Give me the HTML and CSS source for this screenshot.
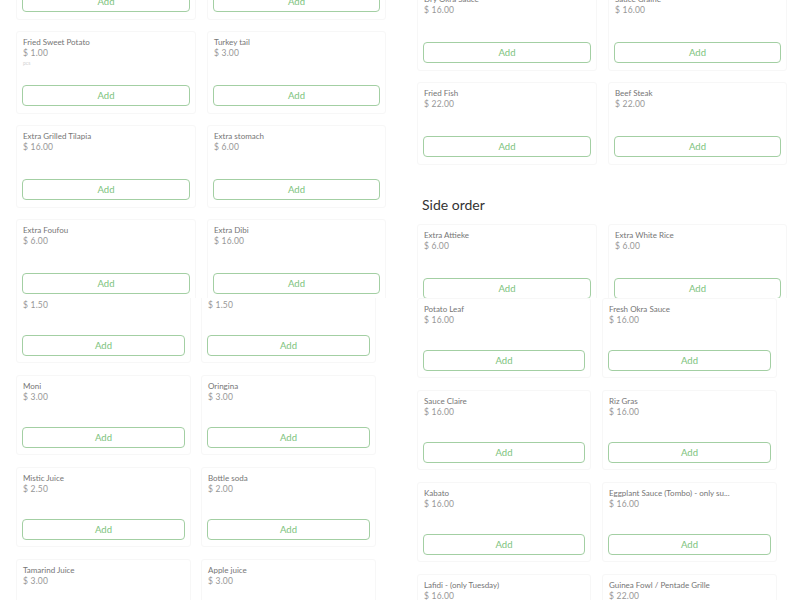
FILE: index.html
```html
<!DOCTYPE html>
<html lang="en">
<head>
    <meta charset="UTF-8">
    <meta name="viewport" content="width=device-width, initial-scale=1.0">
    <title>Menu</title>
    <link rel="stylesheet" href="styles.css">
</head>
<body>
    <div class="page">
        <!-- Left column -->
        <div class="column">
            <div class="pane pane-left-top">
                <div class="menu menu-lg menu-left-top">
                    <div class="card">
                        <div class="card-name">Fried Plantain</div>
                        <div class="card-price">$ 3.00</div>
                        <button class="add-btn">Add</button>
                    </div>
                    <div class="card">
                        <div class="card-name">Fried Yam</div>
                        <div class="card-price">$ 3.00</div>
                        <button class="add-btn">Add</button>
                    </div>
                    <div class="card">
                        <div class="card-name">Fried Sweet Potato</div>
                        <div class="card-price">$ 1.00</div>
                        <div class="card-note">pcs</div>
                        <button class="add-btn">Add</button>
                    </div>
                    <div class="card">
                        <div class="card-name">Turkey tail</div>
                        <div class="card-price">$ 3.00</div>
                        <button class="add-btn">Add</button>
                    </div>
                    <div class="card">
                        <div class="card-name">Extra Grilled Tilapia</div>
                        <div class="card-price">$ 16.00</div>
                        <button class="add-btn">Add</button>
                    </div>
                    <div class="card">
                        <div class="card-name">Extra stomach</div>
                        <div class="card-price">$ 6.00</div>
                        <button class="add-btn">Add</button>
                    </div>
                    <div class="card">
                        <div class="card-name">Extra Foufou</div>
                        <div class="card-price">$ 6.00</div>
                        <button class="add-btn">Add</button>
                    </div>
                    <div class="card">
                        <div class="card-name">Extra Dibi</div>
                        <div class="card-price">$ 16.00</div>
                        <button class="add-btn">Add</button>
                    </div>
                </div>
            </div>
            <div class="pane pane-left-bottom">
                <div class="menu menu-sm menu-left-bottom">
                    <div class="card">
                        <div class="card-name">Water</div>
                        <div class="card-price">$ 1.50</div>
                        <button class="add-btn">Add</button>
                    </div>
                    <div class="card">
                        <div class="card-name">Canned soda</div>
                        <div class="card-price">$ 1.50</div>
                        <button class="add-btn">Add</button>
                    </div>
                    <div class="card">
                        <div class="card-name">Moni</div>
                        <div class="card-price">$ 3.00</div>
                        <button class="add-btn">Add</button>
                    </div>
                    <div class="card">
                        <div class="card-name">Oringina</div>
                        <div class="card-price">$ 3.00</div>
                        <button class="add-btn">Add</button>
                    </div>
                    <div class="card">
                        <div class="card-name">Mistic Juice</div>
                        <div class="card-price">$ 2.50</div>
                        <button class="add-btn">Add</button>
                    </div>
                    <div class="card">
                        <div class="card-name">Bottle soda</div>
                        <div class="card-price">$ 2.00</div>
                        <button class="add-btn">Add</button>
                    </div>
                    <div class="card">
                        <div class="card-name">Tamarind Juice</div>
                        <div class="card-price">$ 3.00</div>
                        <button class="add-btn">Add</button>
                    </div>
                    <div class="card">
                        <div class="card-name">Apple juice</div>
                        <div class="card-price">$ 3.00</div>
                        <button class="add-btn">Add</button>
                    </div>
                </div>
            </div>
        </div>

        <!-- Right column -->
        <div class="column">
            <div class="pane pane-right-top">
                <div class="menu menu-lg menu-right-top">
                    <div class="card">
                        <div class="card-name">Dry Okra Sauce</div>
                        <div class="card-price">$ 16.00</div>
                        <button class="add-btn">Add</button>
                    </div>
                    <div class="card">
                        <div class="card-name">Sauce Graine</div>
                        <div class="card-price">$ 16.00</div>
                        <button class="add-btn">Add</button>
                    </div>
                    <div class="card">
                        <div class="card-name">Fried Fish</div>
                        <div class="card-price">$ 22.00</div>
                        <button class="add-btn">Add</button>
                    </div>
                    <div class="card">
                        <div class="card-name">Beef Steak</div>
                        <div class="card-price">$ 22.00</div>
                        <button class="add-btn">Add</button>
                    </div>
                </div>
                <h2 class="section-title">Side order</h2>
                <div class="menu menu-lg menu-side">
                    <div class="card">
                        <div class="card-name">Extra Attieke</div>
                        <div class="card-price">$ 6.00</div>
                        <button class="add-btn">Add</button>
                    </div>
                    <div class="card">
                        <div class="card-name">Extra White Rice</div>
                        <div class="card-price">$ 6.00</div>
                        <button class="add-btn">Add</button>
                    </div>
                </div>
            </div>
            <div class="pane pane-right-bottom">
                <div class="menu menu-sm menu-right-bottom">
                    <div class="card">
                        <div class="card-name">Potato Leaf</div>
                        <div class="card-price">$ 16.00</div>
                        <button class="add-btn">Add</button>
                    </div>
                    <div class="card">
                        <div class="card-name">Fresh Okra Sauce</div>
                        <div class="card-price">$ 16.00</div>
                        <button class="add-btn">Add</button>
                    </div>
                    <div class="card">
                        <div class="card-name">Sauce Claire</div>
                        <div class="card-price">$ 16.00</div>
                        <button class="add-btn">Add</button>
                    </div>
                    <div class="card">
                        <div class="card-name">Riz Gras</div>
                        <div class="card-price">$ 16.00</div>
                        <button class="add-btn">Add</button>
                    </div>
                    <div class="card">
                        <div class="card-name">Kabato</div>
                        <div class="card-price">$ 16.00</div>
                        <button class="add-btn">Add</button>
                    </div>
                    <div class="card">
                        <div class="card-name">Eggplant Sauce (Tombo) - only su...</div>
                        <div class="card-price">$ 16.00</div>
                        <button class="add-btn">Add</button>
                    </div>
                    <div class="card">
                        <div class="card-name">Lafidi - (only Tuesday)</div>
                        <div class="card-price">$ 16.00</div>
                        <button class="add-btn">Add</button>
                    </div>
                    <div class="card">
                        <div class="card-name">Guinea Fowl / Pentade Grille</div>
                        <div class="card-price">$ 22.00</div>
                        <button class="add-btn">Add</button>
                    </div>
                </div>
            </div>
        </div>
    </div>
</body>
</html>
```

FILE: styles.css
```css
/* Core Styling */
*, *:before, *:after {
    margin: 0;
    padding: 0;
    box-sizing: border-box;
}

body {
    font-family: Lato, "Open Sans", sans-serif;
    background-color: #fff;
    color: #555;
    width: 800px;
    height: 600px;
    overflow: hidden;
}

.page {
    display: grid;
    grid-template-columns: 400px 400px;
    height: 600px;
}

.column {
    display: flex;
    flex-direction: column;
}

.pane {
    overflow: hidden;
}

.pane-left-top {
    height: 298px;
    padding-left: 16px;
}

.pane-left-bottom {
    height: 302px;
    padding-left: 16px;
}

.pane-right-top {
    height: 298px;
    padding-left: 17px;
}

.pane-right-bottom {
    height: 302px;
    padding-left: 17px;
}

/* Menu grids */
.menu {
    display: grid;
}

.menu-lg {
    grid-template-columns: 180px 179px;
    column-gap: 11px;
    row-gap: 11px;
}

.menu-lg .card {
    height: 83px;
    padding: 5px 5px 7px;
}

.menu-sm {
    grid-template-columns: 175px 175px;
    column-gap: 10px;
    row-gap: 12px;
}

.menu-sm .card {
    height: 80px;
    padding: 5px 5px 6px;
}

.menu-left-top {
    margin-top: -63px;
}

.menu-right-top {
    margin-top: -12px;
}

.menu-left-bottom {
    margin-top: -15px;
}

.menu-right-bottom {
    grid-template-columns: 174px 175px;
    column-gap: 11px;
}

.section-title {
    font-size: 14px;
    font-weight: 400;
    line-height: 18px;
    color: #333;
    margin: 31px 0 10px 5px;
}

/* Cards */
.card {
    background-color: #fff;
    border: 1px solid #f7f7f7;
    border-radius: 3px;
    display: flex;
    flex-direction: column;
}

.card-name,
.card-price {
    font-size: 8px;
    line-height: 11px;
    padding-left: 1px;
    white-space: nowrap;
    overflow: hidden;
    text-overflow: ellipsis;
}

.card-name {
    color: #757575;
}

.card-price {
    color: #979797;
    font-size: 8.5px;
    letter-spacing: 0.2px;
}

.card-note {
    font-size: 5px;
    line-height: 9px;
    padding-left: 1px;
    color: #d2d2d2;
}

.add-btn {
    margin-top: auto;
    height: 21px;
    width: 100%;
    background-color: #fff;
    border: 1px solid #a3cfa3;
    border-radius: 4px;
    color: #7cc27c;
    font-family: Lato, "Open Sans", sans-serif;
    font-size: 9.5px;
    cursor: pointer;
}

.add-btn:hover {
    background-color: #f3faf3;
}
```
